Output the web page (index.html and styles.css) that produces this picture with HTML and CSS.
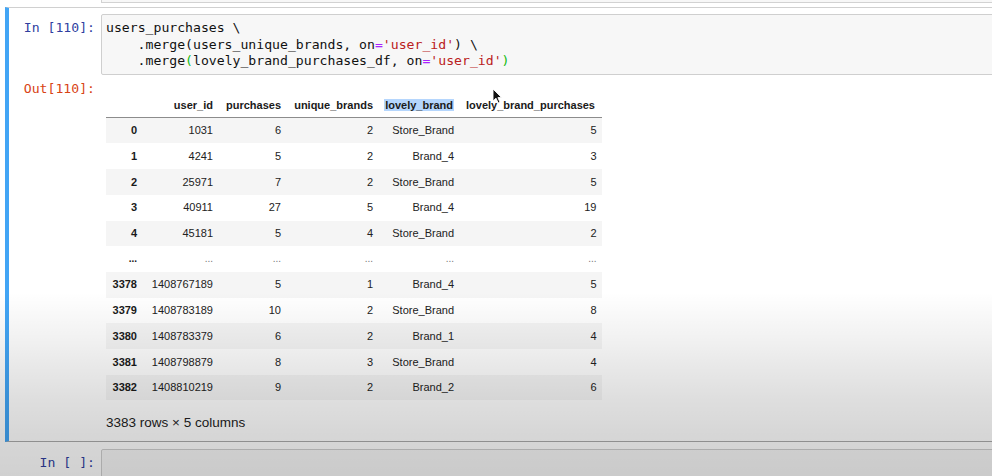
FILE: index.html
```html
<!DOCTYPE html>
<html>
<head>
<meta charset="utf-8">
<link rel="stylesheet" href="styles.css">
</head>
<body>
<div class="prev-cell"><div class="prev-input"></div></div>

<div class="cell selected">
  <div class="row">
    <div class="prompt in-prompt">In [110]:</div>
    <div class="code-box">
      <div class="code">
        <div class="ln">users_purchases \</div>
        <div class="ln ind"><span>.merge(users_unique_brands, on</span><span class="o">=</span><span class="s">'user_id'</span><span>) \</span></div>
        <div class="ln ind"><span>.merge</span><span class="mb">(</span><span>lovely_brand_purchases_df, on</span><span class="o">=</span><span class="s">'user_id'</span><span class="mb">)</span></div>
      </div>
    </div>
  </div>
  <div class="row output-row">
    <div class="prompt out-prompt">Out[110]:</div>
    <div class="output-sub">
      <table class="df">
        <colgroup>
          <col class="c-idx"><col class="c-uid"><col class="c-pur"><col class="c-ub"><col class="c-lb"><col class="c-lbp">
        </colgroup>
        <thead>
          <tr><th></th><th>user_id</th><th>purchases</th><th>unique_brands</th><th><span class="sel">lovely_brand</span></th><th>lovely_brand_purchases</th></tr>
        </thead>
        <tbody>
          <tr><th>0</th><td>1031</td><td>6</td><td>2</td><td>Store_Brand</td><td>5</td></tr>
          <tr><th>1</th><td>4241</td><td>5</td><td>2</td><td>Brand_4</td><td>3</td></tr>
          <tr><th>2</th><td>25971</td><td>7</td><td>2</td><td>Store_Brand</td><td>5</td></tr>
          <tr><th>3</th><td>40911</td><td>27</td><td>5</td><td>Brand_4</td><td>19</td></tr>
          <tr><th>4</th><td>45181</td><td>5</td><td>4</td><td>Store_Brand</td><td>2</td></tr>
          <tr class="dots"><th>...</th><td>...</td><td>...</td><td>...</td><td>...</td><td>...</td></tr>
          <tr><th>3378</th><td>1408767189</td><td>5</td><td>1</td><td>Brand_4</td><td>5</td></tr>
          <tr><th>3379</th><td>1408783189</td><td>10</td><td>2</td><td>Store_Brand</td><td>8</td></tr>
          <tr><th>3380</th><td>1408783379</td><td>6</td><td>2</td><td>Brand_1</td><td>4</td></tr>
          <tr><th>3381</th><td>1408798879</td><td>8</td><td>3</td><td>Store_Brand</td><td>4</td></tr>
          <tr><th>3382</th><td>1408810219</td><td>9</td><td>2</td><td>Brand_2</td><td>6</td></tr>
        </tbody>
      </table>
      <p class="shape">3383 rows × 5 columns</p>
    </div>
  </div>
</div>

<div class="cell plain">
  <div class="row">
    <div class="prompt in-prompt">In [ ]:</div>
    <div class="code-box empty"></div>
  </div>
</div>

<svg class="cursor" width="11" height="16" viewBox="0 0 11 16">
  <path d="M1 1 L1 13 L4 10.2 L6.2 15 L8 14.2 L5.9 9.6 L9.6 9.6 Z" fill="#111" stroke="#fff" stroke-width="0.9" stroke-linejoin="round"/>
</svg>

<div class="vignette"></div>
</body>
</html>
```

FILE: styles.css
```css
* { box-sizing: border-box; }

html, body {
  margin: 0;
  padding: 0;
  background: #fff;
  overflow: hidden;
}

body {
  width: 992px;
  height: 476px;
  position: relative;
  font-family: "Liberation Sans", Arial, sans-serif;
  color: #000;
}

.prev-cell {
  padding-left: 101px;
}

.prev-input {
  height: 3px;
  margin-right: -10px;
  border: 1px solid #d2d2d2;
  border-top: none;
  background: #f7f7f7;
}

.cell {
  margin-left: 5px;
  margin-right: -10px;
  padding: 6px 0 5px 5px;
}

.cell.selected {
  margin-top: 4px;
  border: 1px solid #ababab;
  border-top-color: #d0d0d0;
  border-left: 4px solid #42a5f5;
}

.cell.plain {
  border: 1px solid transparent;
  border-left: 4px solid transparent;
}

.row {
  display: flex;
  align-items: flex-start;
}

.prompt {
  width: 87px;
  flex: none;
  text-align: right;
  padding: 6px 6px 0 0;
  font-family: "DejaVu Sans Mono", "Liberation Mono", monospace;
  font-size: 13.15px;
  line-height: 16.5px;
  white-space: pre;
}

.in-prompt { color: #303f9f; }

.out-prompt {
  color: #d84315;
  padding-top: 2px;
}

.code-box {
  flex: 1;
  border: 1px solid #cfcfcf;
  border-radius: 2px;
  background: #f7f7f7;
  padding: 5px 4px 4px;
}

.code-box.empty {
  height: 40px;
}

.code {
  font-family: "DejaVu Sans Mono", "Liberation Mono", monospace;
  font-size: 13.15px;
  line-height: 16.5px;
  color: #111;
}

.ln {
  white-space: pre;
  height: 16.5px;
}

.ln.ind {
  padding-left: 31.6px;
}

.code .o { color: #aa22ff; }
.code .s { color: #ba2121; }
.code .mb { color: #11bb11; }

.output-row {
  margin-top: 4px;
}

.output-sub {
  flex: 1;
  padding: 13.5px 0 5px 5px;
}

.df {
  border-collapse: collapse;
  border-spacing: 0;
  table-layout: fixed;
  width: 496px;
  font-size: 11px;
  color: #222;
}

.c-idx { width: 36.5px; }
.c-uid { width: 76px; }
.c-pur { width: 68px; }
.c-ub  { width: 92px; }
.c-lb  { width: 81px; }
.c-lbp { width: 142.5px; }

.df th,
.df td {
  padding: 6.5px 5.5px;
  line-height: 12.7px;
  text-align: right;
  white-space: nowrap;
  vertical-align: middle;
}

.df th { font-weight: bold; color: #1a1a1a; }

.df thead th {
  padding-bottom: 5.5px;
  border-bottom: 1px solid #8c8c8c;
}

.df thead th:last-child {
  padding-right: 7px;
}

.df tbody tr:nth-child(odd) { background: #f5f5f5; }

.df .dots td { color: #777; font-size: 10px; }
.df .dots th { font-size: 10px; }

.sel {
  background: #b5d6fd;
  padding: 0 1px;
}

.shape {
  margin: 14px 0 0;
  font-size: 13.5px;
  line-height: 17px;
  color: #222;
}

.cursor {
  position: absolute;
  left: 492px;
  top: 88px;
}

.vignette {
  position: absolute;
  left: 0;
  top: 0;
  width: 992px;
  height: 476px;
  pointer-events: none;
  background: linear-gradient(to bottom,
    rgba(0,0,0,0) 0px,
    rgba(0,0,0,0) 292px,
    rgba(0,0,0,0.047) 333px,
    rgba(0,0,0,0.09) 367px,
    rgba(0,0,0,0.13) 400px,
    rgba(0,0,0,0.16) 435px,
    rgba(0,0,0,0.18) 476px);
}
```
